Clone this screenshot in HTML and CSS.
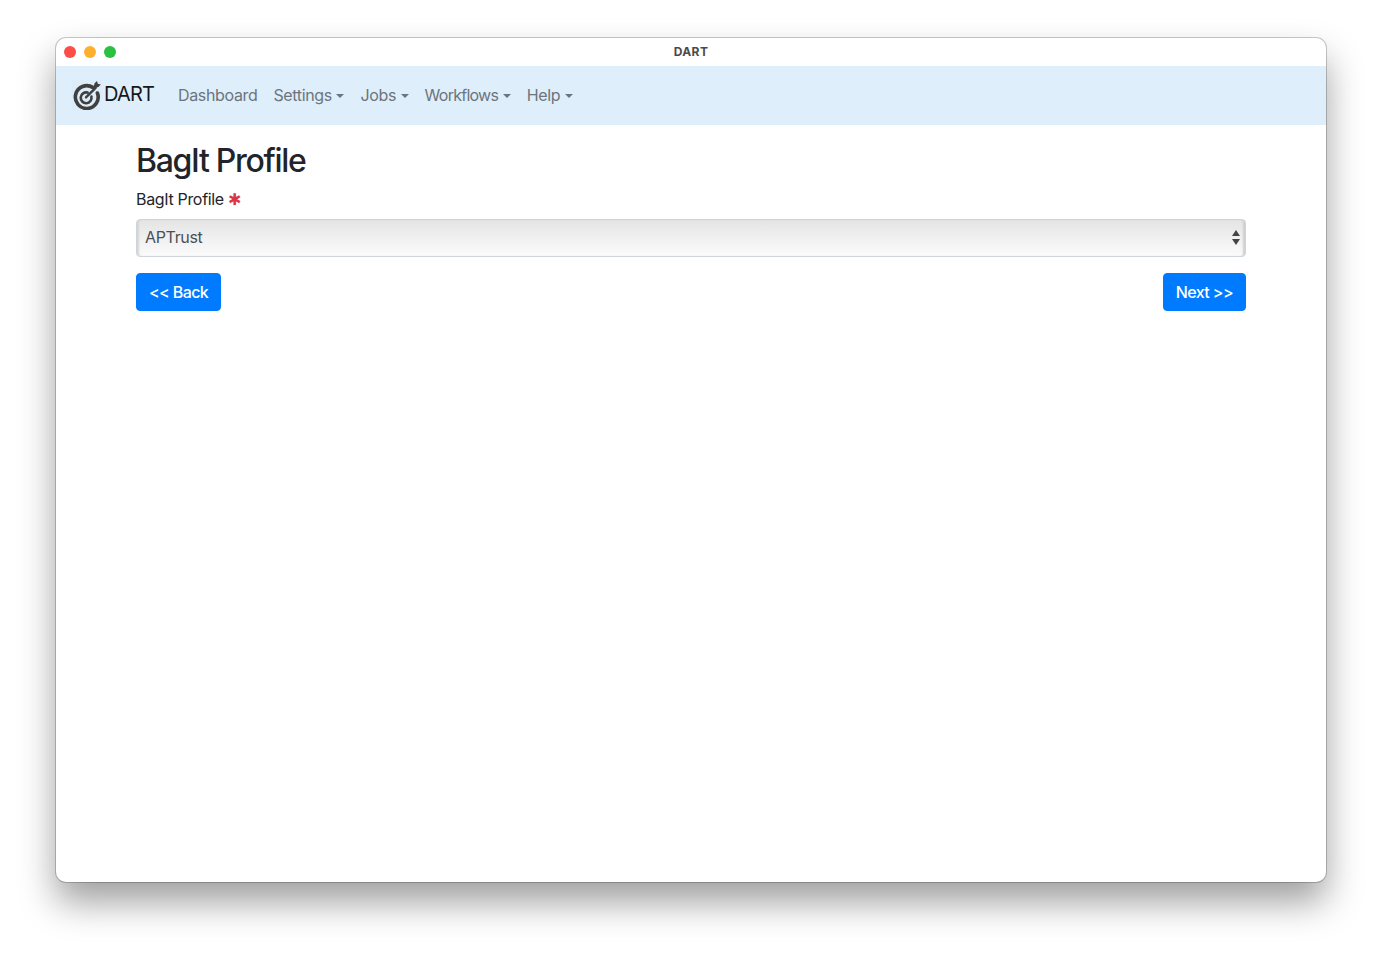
FILE: index.html
```html
<!DOCTYPE html>
<html>
  <head>
    <link rel="stylesheet" href="styles.css">
  </head>

  <body>
    <div class="window">
      <div class="titlebar">
        <div class="lights">
          <span class="light red"></span>
          <span class="light yellow"></span>
          <span class="light green"></span>
        </div>
        <div class="title">DART</div>
      </div>

      <div class="navbar">
        <a class="brand">
          <svg class="logo" viewBox="0 0 30 30" width="30" height="30">
            <path d="M20.8 7.4A11.4 11.4 0 1 0 25.4 13" fill="none" stroke="#404040" stroke-width="3.6" stroke-linecap="round"/>
            <path d="M15.6 12.6A5.4 5.4 0 1 0 19.4 16.6" fill="none" stroke="#404040" stroke-width="2.6" stroke-linecap="round"/>
            <path d="M14 17.4L23.6 7.8" stroke="#404040" stroke-width="2.4" stroke-linecap="round"/>
            <path d="M21.6 7L22.6 3.2L25 1L25.8 3.8L28.8 4.6L26.4 7L22.6 8.2Z" fill="#404040"/>
          </svg>
          <span>DART</span>
        </a>
        <ul class="nav">
          <li>Dashboard</li>
          <li class="dropdown">Settings</li>
          <li class="dropdown">Jobs</li>
          <li class="dropdown workflows">Workflows</li>
          <li class="dropdown">Help</li>
        </ul>
      </div>

      <div class="main">
        <h2>BagIt Profile</h2>
        <div class="form-group">
          <label>BagIt Profile <span class="required">&#10033;</span></label>
          <div class="select">
            <span>APTrust</span>
            <span class="arrows"></span>
          </div>
        </div>
        <div class="buttons">
          <button class="btn">&lt;&lt; Back</button>
          <button class="btn">Next &gt;&gt;</button>
        </div>
      </div>
    </div>
  </body>
</html>
```

FILE: styles.css
```css
html,
body {
  height: 100%;
}

body {
  margin: 0;
  padding: 38px 56px 74px;
  box-sizing: border-box;
  background-color: white;
  font-family: Inter, "Liberation Sans", sans-serif;
  color: #212529;
}

.window {
  height: 100%;
  display: flex;
  flex-direction: column;
  overflow: hidden;
  background-color: white;
  border-radius: 10px;
  box-shadow: 0 0 0 1px rgba(0, 0, 0, 0.2), 0 20px 36px rgba(0, 0, 0, 0.38);
}

.titlebar {
  position: relative;
  height: 28px;
  flex: none;
  display: flex;
  align-items: center;
  justify-content: center;
  padding-bottom: 2px;
  box-sizing: border-box;
}

.lights {
  position: absolute;
  left: 8px;
  top: 8px;
  display: flex;
  gap: 8px;
}

.light {
  width: 12px;
  height: 12px;
  border-radius: 50%;
}

.red {
  background-color: #fc4e47;
}

.yellow {
  background-color: #fdb02e;
}

.green {
  background-color: #2ac041;
}

.title {
  font-size: 12px;
  font-weight: 700;
  letter-spacing: 0.4px;
  color: #4a4a4a;
}

.navbar {
  height: 59px;
  flex: none;
  box-sizing: border-box;
  display: flex;
  align-items: center;
  padding: 0 16px 2px;
  background-color: #deeefb;
}

.brand {
  display: flex;
  align-items: flex-start;
  width: 106px;
  flex: none;
  font-size: 20px;
  line-height: 24px;
  letter-spacing: -0.8px;
  color: #16181b;
}

.logo {
  flex: none;
  background-color: #dcecf8;
}

.brand span {
  margin-top: 2px;
  margin-left: 2px;
}

.nav {
  display: flex;
  gap: 16px;
  margin: 0;
  padding: 0;
  list-style: none;
  font-size: 16px;
  line-height: 24px;
  letter-spacing: -0.35px;
  color: #6c757d;
}

.workflows {
  letter-spacing: -0.75px;
}

.dropdown::after {
  content: "";
  display: inline-block;
  margin-left: 4.6px;
  vertical-align: 3px;
  border-top: 4px solid #6c757d;
  border-left: 4px solid transparent;
  border-right: 4px solid transparent;
}

.main {
  flex: 1;
  padding: 18px 80px 16px;
}

h2 {
  margin: 0 0 8px;
  font-size: 32px;
  font-weight: 500;
  line-height: 36.4px;
  letter-spacing: -1.3px;
}

.form-group {
  margin-bottom: 16px;
}

label {
  display: block;
  margin-bottom: 8px;
  font-size: 16px;
  line-height: 24px;
  letter-spacing: -0.33px;
}

.required {
  color: #dc3545;
  font-size: 16px;
  line-height: 16px;
}

.select {
  height: 38px;
  box-sizing: border-box;
  display: flex;
  align-items: center;
  justify-content: space-between;
  padding: 0 5px 2px 8px;
  border: 1px solid #ced4da;
  border-radius: 4px;
  background: linear-gradient(#e4e4e4, #efefef 45%, #fbfbfb);
  box-shadow: inset 3px 0 2px -1px #d5d5d5, inset -3px 0 2px -1px #cfcfcf;
  font-size: 16px;
  letter-spacing: -0.35px;
  color: #495057;
}

.arrows {
  position: relative;
  width: 8px;
  height: 15px;
}

.arrows::before,
.arrows::after {
  content: "";
  position: absolute;
  left: 0;
  border-left: 4px solid transparent;
  border-right: 4px solid transparent;
}

.arrows::before {
  top: 0;
  border-bottom: 6px solid #444;
}

.arrows::after {
  bottom: 0;
  border-top: 6px solid #444;
}

.buttons {
  display: flex;
  justify-content: space-between;
}

.btn {
  height: 38px;
  padding: 0 12px;
  border: 1px solid #007bff;
  border-radius: 4px;
  background-color: #007bff;
  color: white;
  font-family: inherit;
  font-size: 16px;
  font-weight: 500;
  letter-spacing: -0.6px;
  cursor: pointer;
}
```
